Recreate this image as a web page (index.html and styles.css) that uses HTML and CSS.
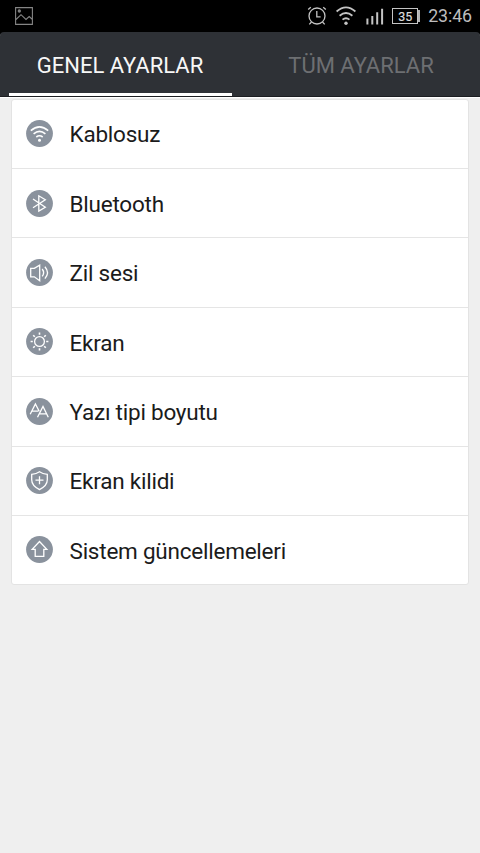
FILE: index.html
```html
<!DOCTYPE html>
<html lang="tr">
<head>
<meta charset="utf-8">
<title>Ayarlar</title>
<link rel="stylesheet" href="styles.css">
</head>
<body>
<header class="status">
  <svg class="picture" width="18" height="18" viewBox="0 0 18 18"><path d="M.6.6h16.8v16.8H.6zM1 12.5l5-4.8 5 4.8 3.2-3 3.3 3"/><circle cx="4.3" cy="4" r="1.1"/></svg>
  <div class="indicators">
    <svg class="alarm" width="20" height="20" viewBox="0 0 20 20"><circle cx="10" cy="10" r="8"/><path d="M9.8 5v5.8h3.8M1.2 3.6l2.6-2.3M18.8 3.6l-2.6-2.3M4.5 16l-2.2 2.4M15.5 16l2.2 2.4"/></svg>
    <svg class="wifi" width="20" height="20" viewBox="0 0 20 20"><path d="M.6 5.5q9.4-8.2 18.8 0M3.6 9.7q6.4-5.4 12.8 0M6.5 13.6q3.5-2.7 7 0"/><circle cx="10" cy="17.3" r="1.7"/></svg>
    <svg class="signal" width="18" height="17" viewBox="0 0 18 17"><path d="M1.4 16.5v-6M6.3 16.5v-8.5M11.2 16.5V4.2M16.1 16.5V.8"/></svg>
    <span class="battery">35</span>
    <span class="clock">23:46</span>
  </div>
</header>
<nav class="tabs">
  <div class="tab active"><span>GENEL AYARLAR</span></div>
  <div class="tab"><span>TÜM AYARLAR</span></div>
</nav>
<main class="list">
  <div class="row">
    <svg class="icon" viewBox="0 0 27 27"><circle class="disc" cx="13.5" cy="13.5" r="13.4"/><path d="M4.8 10.6q8.7-7.6 17.4 0M7.6 13.9q5.9-4.9 11.8 0M10.3 17q3.2-2.4 6.4 0" stroke-width="1.6"/><circle class="dot" cx="13.5" cy="20.3" r="1.5"/></svg>
    <span>Kablosuz</span>
  </div>
  <div class="row">
    <svg class="icon" viewBox="0 0 27 27"><circle class="disc" cx="13.5" cy="13.5" r="13.4"/><path d="M7 9l12.3 8.3-6.5 3.8V5.8l6.5 3.9L7 17.8"/></svg>
    <span>Bluetooth</span>
  </div>
  <div class="row">
    <svg class="icon" viewBox="0 0 27 27"><circle class="disc" cx="13.5" cy="13.5" r="13.4"/><path d="M4.7 9.4h3.6l5.4-3.3v15.6l-5.4-3.9H4.7zM16.2 10q2.8 3.7 0 7.4M18.9 7.8q5.2 5.9 0 11.8"/></svg>
    <span>Zil sesi</span>
  </div>
  <div class="row">
    <svg class="icon" viewBox="0 0 27 27"><circle class="disc" cx="13.5" cy="13.5" r="13.4"/><circle cx="13.5" cy="13.5" r="4.9"/><path d="M13.5 4.6v2.2M13.5 20.2v2.2M4.6 13.5h2.2M20.2 13.5h2.2M7.2 7.2l1.6 1.6M18.2 18.2l1.6 1.6M19.8 7.2l-1.6 1.6M8.8 18.2l-1.6 1.6" stroke-width="1.6"/></svg>
    <span>Ekran</span>
  </div>
  <div class="row">
    <svg class="icon" viewBox="0 0 27 27"><circle class="disc" cx="13.5" cy="13.5" r="13.4"/><path d="M4.2 16.2L9.4 5.9l3.8 7.3M6 13.1h6.3M11.5 19.2L17 8.5l5.3 10.7M13.5 15.8h7"/></svg>
    <span>Yazı tipi boyutu</span>
  </div>
  <div class="row">
    <svg class="icon" viewBox="0 0 27 27"><circle class="disc" cx="13.5" cy="13.5" r="13.4"/><path d="M13.5 4.8q3 2.2 7.8 2.5v5.5q0 6-7.8 9.8-7.8-3.8-7.8-9.8V7.3q4.8-.3 7.8-2.5zM13.5 9.2v8M9.5 13.2h8"/></svg>
    <span>Ekran kilidi</span>
  </div>
  <div class="row">
    <svg class="icon" viewBox="0 0 27 27"><circle class="disc" cx="13.5" cy="13.5" r="13.4"/><path d="M13.5 5.5l7.3 7.8h-3v7H9.2v-7h-3z"/></svg>
    <span>Sistem güncellemeleri</span>
  </div>
</main>
</body>
</html>
```
FILE: styles.css
```css
* { box-sizing: border-box; }
body {
  margin: 0;
  height: 853px;
  overflow: hidden;
  background: linear-gradient(#000 40px, #efefef 40px);
  font-family: Roboto, sans-serif;
}
svg { display: block; flex: none; fill: none; }
.status {
  height: 32px;
  display: flex;
  justify-content: space-between;
  align-items: center;
  padding: 0 8px 0 15px;
  color: #bdbdbd;
}
.status svg { stroke: #c4c4c4; stroke-width: 1.3; }
.status .picture { stroke: #858585; stroke-width: 1.1; margin-bottom: 1px; }
.picture circle { fill: #858585; }
.indicators { display: flex; align-items: center; }
.alarm { margin-right: 9px; margin-bottom: 1px; }
.status .wifi { stroke-width: 1.8; margin-right: 10px; }
.wifi circle { fill: #c4c4c4; stroke: none; }
.status .signal { stroke-width: 2; margin-right: 8px; }
.battery {
  position: relative;
  width: 26px;
  height: 16px;
  border: 1px solid #c4c4c4;
  margin-right: 10px;
  font-size: 12.5px;
  line-height: 15px;
  text-align: center;
  color: #ddd;
  -webkit-text-stroke: .2px #ddd;
}
.battery::after {
  content: "";
  position: absolute;
  right: -3px;
  top: 1px;
  width: 2px;
  height: 12px;
  background: #b4b4b4;
}
.clock { font-size: 17.8px; line-height: 32px; letter-spacing: -.1px; }
.tabs {
  height: 65px;
  display: flex;
  padding: 0 8px 0 9px;
  background: #2e3136;
  border-radius: 4px 4px 0 0;
  border-bottom: 1px solid #1c1e22;
  box-shadow: 0 1px #fff;
}
.tab {
  flex: 1;
  display: flex;
  justify-content: center;
  align-items: center;
  color: #6d6f72;
  font-size: 22px;
  padding-top: 3px;
}
.active { color: #f7f7f7; flex: 0 0 223px; border-bottom: 3px solid #fff; padding-top: 5px; }
.active span { margin-right: 1px; }
.tab:last-child { padding-left: 18px; }
.list {
  height: 486.4px;
  margin: 1.6px 11px 0;
  display: grid;
  grid-template-rows: repeat(6, 69.4px) 1fr;
  background: #fff;
  border: 1px solid #e3e3e3;
  border-radius: 3px;
}
.row {
  display: flex;
  align-items: center;
  padding-left: 14px;
  border-bottom: 1px solid #e5e5e5;
  color: #1b1b1b;
  font-size: 22.5px;
  letter-spacing: -.23px;
}
.row:last-child { border-bottom: 0; }
.row span { margin-left: 16.5px; padding-top: 1.4px; }
.icon { width: 27px; height: 27px; stroke: #fff; stroke-width: 1.3; }
.icon .disc { fill: #8a929d; stroke: none; }
.icon .dot { fill: #fff; stroke: none; }
```
